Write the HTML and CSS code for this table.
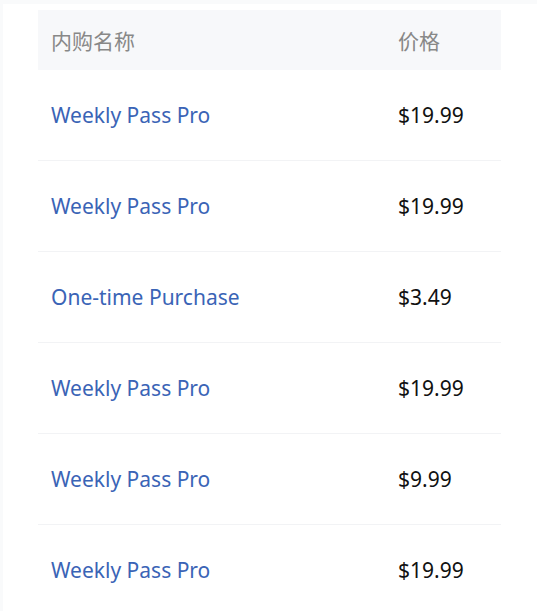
FILE: index.html
```html
<!DOCTYPE html>
<html lang="zh">
<head>
    <meta charset="UTF-8">
    <meta name="viewport" content="width=device-width, initial-scale=1.0">
    <title>内购列表</title>
    <link rel="stylesheet" href="styles.css">
</head>
<body>
    <main class="page">
        <div class="table">
            <div class="row head">
                <div class="cell">内购名称</div>
                <div class="cell">价格</div>
            </div>
            <div class="row">
                <div class="cell name">Weekly Pass Pro</div>
                <div class="cell price">$19.99</div>
            </div>
            <div class="row">
                <div class="cell name">Weekly Pass Pro</div>
                <div class="cell price">$19.99</div>
            </div>
            <div class="row">
                <div class="cell name">One-time Purchase</div>
                <div class="cell price">$3.49</div>
            </div>
            <div class="row">
                <div class="cell name">Weekly Pass Pro</div>
                <div class="cell price">$19.99</div>
            </div>
            <div class="row">
                <div class="cell name">Weekly Pass Pro</div>
                <div class="cell price">$9.99</div>
            </div>
            <div class="row">
                <div class="cell name">Weekly Pass Pro</div>
                <div class="cell price">$19.99</div>
            </div>
        </div>
    </main>
</body>
</html>
```

FILE: styles.css
```css
body {
    margin: 0;
    padding: 0;
    background: #f9fafb;
    font-family: "Noto Sans", "Noto Sans CJK SC", sans-serif;
    font-size: 21px;
    height: 611px;
    overflow: hidden;
}

.page {
    margin: 4px 0 0 3px;
    padding: 6px 36px 0 35px;
    background: #fff;
    height: 620px;
}

.row {
    display: grid;
    grid-template-columns: 347px 1fr;
    align-items: center;
    height: 90px;
    border-bottom: 1px solid #f2f3f5;
}

.row.head {
    height: 60px;
    background: #f7f8fa;
    color: #888;
    border-bottom: none;
}

.cell {
    padding: 0 13px;
    white-space: nowrap;
}

.name {
    color: #3a64b6;
}

.price {
    color: #111;
}
```
